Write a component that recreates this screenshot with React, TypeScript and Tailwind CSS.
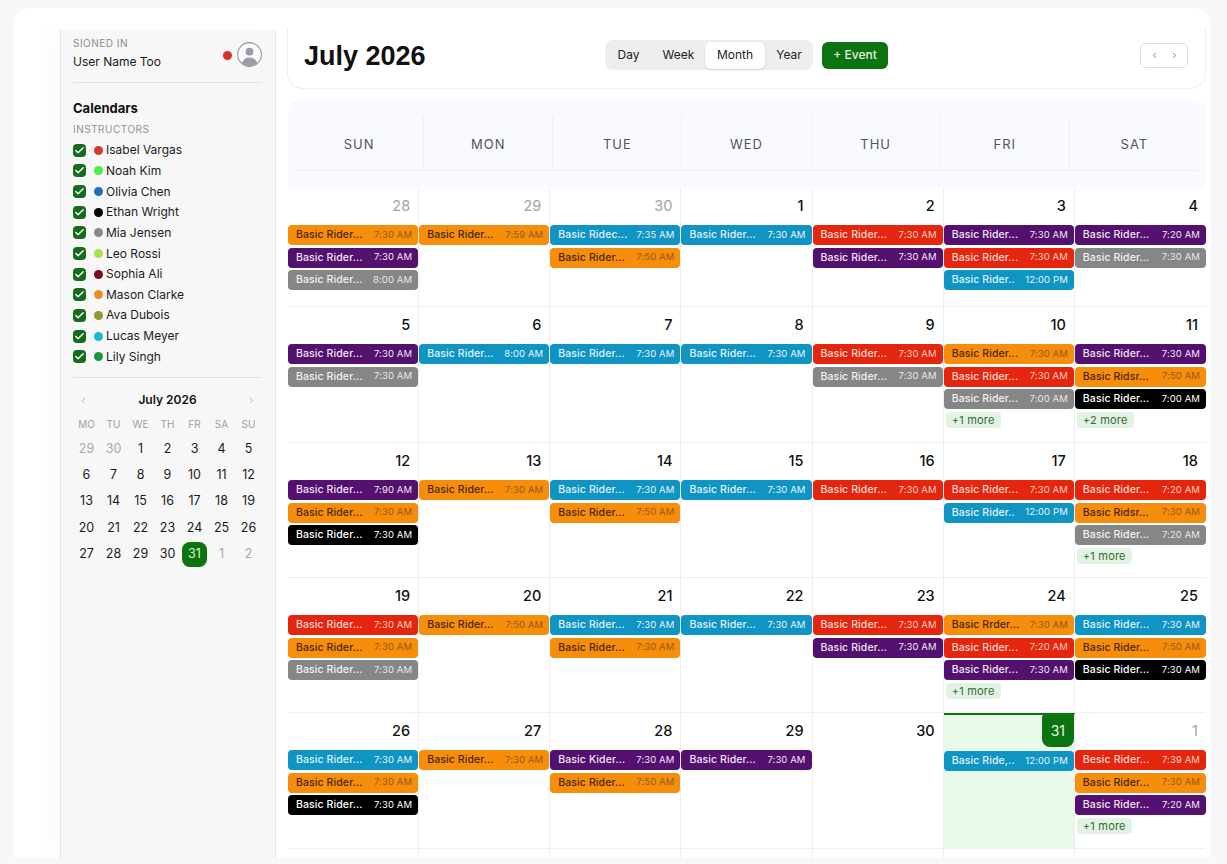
import { Check, ChevronLeft, ChevronRight } from "lucide-react";

type Color = "o" | "p" | "g" | "b" | "r" | "k";
type Ev = [Color, string, string?];
type Day = { n: number; muted?: boolean; today?: boolean; events: Ev[]; more?: number };

const colorClass: Record<Color, { box: string; title: string; time: string }> = {
  o: { box: "bg-[#f68e0c]", title: "text-[#4a2406]", time: "text-[#95591a]" },
  p: { box: "bg-[#54106f]", title: "text-[#f1e6f5]", time: "text-[#f1e6f5]" },
  g: { box: "bg-[#868686]", title: "text-[#f2f2f2]", time: "text-[#e6e6e6]" },
  b: { box: "bg-[#0f94c4]", title: "text-[#e0f3fa]", time: "text-[#e8f6fb]" },
  r: { box: "bg-[#e5260f]", title: "text-[#ffd9d0]", time: "text-[#ffd0c4]" },
  k: { box: "bg-black", title: "text-white", time: "text-white" },
};

const weeks: { h: string; days: Day[] }[] = [
  {
    h: "h-[119px]",
    days: [
      { n: 28, muted: true, events: [["o", "7:30 AM"], ["p", "7:30 AM"], ["g", "8:00 AM"]] },
      { n: 29, muted: true, events: [["o", "7:59 AM"]] },
      { n: 30, muted: true, events: [["b", "7:35 AM", "Basic Ridec..."], ["o", "7:50 AM"]] },
      { n: 1, events: [["b", "7:30 AM"]] },
      { n: 2, events: [["r", "7:30 AM"], ["p", "7:30 AM"]] },
      { n: 3, events: [["p", "7:30 AM"], ["r", "7:30 AM"], ["b", "12:00 PM", "Basic Rider.."]] },
      { n: 4, events: [["p", "7:20 AM"], ["g", "7:30 AM"]] },
    ],
  },
  {
    h: "h-[136px]",
    days: [
      { n: 5, events: [["p", "7:30 AM"], ["g", "7:30 AM"]] },
      { n: 6, events: [["b", "8:00 AM"]] },
      { n: 7, events: [["b", "7:30 AM"]] },
      { n: 8, events: [["b", "7:30 AM"]] },
      { n: 9, events: [["r", "7:30 AM"], ["g", "7:30 AM"]] },
      { n: 10, events: [["o", "7:30 AM"], ["r", "7:30 AM"], ["g", "7:00 AM"]], more: 1 },
      { n: 11, events: [["p", "7:30 AM"], ["o", "7:50 AM", "Basic Ridsr..."], ["k", "7:00 AM"]], more: 2 },
    ],
  },
  {
    h: "h-[135px]",
    days: [
      { n: 12, events: [["p", "7:90 AM"], ["o", "7:30 AM"], ["k", "7:30 AM"]] },
      { n: 13, events: [["o", "7:30 AM"]] },
      { n: 14, events: [["b", "7:30 AM"], ["o", "7:50 AM"]] },
      { n: 15, events: [["b", "7:30 AM"]] },
      { n: 16, events: [["r", "7:30 AM"]] },
      { n: 17, events: [["r", "7:30 AM"], ["b", "12:00 PM", "Basic Rider.."]] },
      { n: 18, events: [["r", "7:20 AM"], ["o", "7:30 AM", "Basic Ridsr..."], ["g", "7:20 AM"]], more: 1 },
    ],
  },
  {
    h: "h-[135px]",
    days: [
      { n: 19, events: [["r", "7:30 AM"], ["o", "7:30 AM"], ["g", "7:30 AM"]] },
      { n: 20, events: [["o", "7:50 AM"]] },
      { n: 21, events: [["b", "7:30 AM"], ["o", "7:30 AM"]] },
      { n: 22, events: [["b", "7:30 AM"]] },
      { n: 23, events: [["r", "7:30 AM"], ["p", "7:30 AM"]] },
      { n: 24, events: [["o", "7:30 AM", "Basic Rrder..."], ["r", "7:20 AM"], ["p", "7:30 AM"]], more: 1 },
      { n: 25, events: [["b", "7:30 AM"], ["o", "7:50 AM"], ["k", "7:30 AM"]] },
    ],
  },
  {
    h: "h-[136px]",
    days: [
      { n: 26, events: [["b", "7:30 AM"], ["o", "7:30 AM"], ["k", "7:30 AM"]] },
      { n: 27, events: [["o", "7:30 AM"]] },
      { n: 28, events: [["p", "7:30 AM", "Basic Kider..."], ["o", "7:50 AM"]] },
      { n: 29, events: [["p", "7:30 AM"]] },
      { n: 30, events: [] },
      { n: 31, today: true, events: [["b", "12:00 PM", "Basic Ride,.."]] },
      { n: 1, muted: true, events: [["r", "7:39 AM", "Besic Rider..."], ["o", "7:30 AM"], ["p", "7:20 AM"]], more: 1 },
    ],
  },
];

const instructors = [
  ["Isabel Vargas", "bg-[#d93a2b]"],
  ["Noah Kim", "bg-[#45ee4a]"],
  ["Olivia Chen", "bg-[#1f6fc0]"],
  ["Ethan Wright", "bg-black"],
  ["Mia Jensen", "bg-[#8a8a8e]"],
  ["Leo Rossi", "bg-[#a6e34f]"],
  ["Sophia Ali", "bg-[#7a0c1e]"],
  ["Mason Clarke", "bg-[#f28c28]"],
  ["Ava Dubois", "bg-[#8f9a32]"],
  ["Lucas Meyer", "bg-[#12bcd0]"],
  ["Lily Singh", "bg-[#149a3c]"],
];

const miniDays = [
  29, 30, 1, 2, 3, 4, 5, 6, 7, 8, 9, 10, 11, 12, 13, 14, 15, 16, 17, 18, 19, 20, 21, 22, 23, 24, 25, 26, 27, 28, 29, 30,
  31, 1, 2,
];

function EventChip({ ev }: { ev: Ev }) {
  const c = colorClass[ev[0]];
  return (
    <div className={`h-[20px] rounded-[4px] flex items-center justify-between pl-[8px] pr-[6px] text-[10.5px] tracking-[0.1px] font-medium whitespace-nowrap ${c.box}`}>
      <span className={c.title}>{ev[2] ?? "Basic Rider..."}</span>
      <span className={`font-normal text-[9.5px] ${c.time}`}>{ev[1]}</span>
    </div>
  );
}

function DayCell({ day }: { day: Day }) {
  return (
    <div className={`border-r border-[#eeeeee] last:border-r-0 min-w-0 ${day.today ? "bg-[#e8f8e9] border-t-2 border-t-[#0b730f]" : ""}`}>
      {day.today ? (
        <div className="h-[36px] flex justify-end">
          <div className="w-[32px] h-[33px] -mt-px bg-[#0b730f] text-[#e8f8e9] rounded-b-lg rounded-tl-sm flex items-center justify-center text-[14px]">
            {day.n}
          </div>
        </div>
      ) : (
        <div className={`h-[37px] pt-[8px] pr-[8px] text-right text-[14.5px] font-medium leading-[20px] ${day.muted ? "text-[#a3a3a3] font-normal" : "text-[#111111]"}`}>
          {day.n}
        </div>
      )}
      <div className="flex flex-col gap-[2.5px]">
        {day.events.map((ev, i) => (
          <EventChip key={i} ev={ev} />
        ))}
        {day.more && (
          <div className="self-start ml-[2px] h-[16px] px-[6px] rounded-[4px] bg-[#e3f3e3] text-[#2f6b34] text-[11px] tracking-[0.2px] leading-[16px]">
            +{day.more} more
          </div>
        )}
      </div>
    </div>
  );
}

function Sidebar() {
  return (
    <aside className="w-[216px] shrink-0 mt-[22px] bg-[#f7f7f7] border-x border-[#e3e4e6] pl-[12px] pr-[13px] shadow-[-14px_0_18px_rgba(0,0,0,0.015)]">
      <div className="h-[53px] pt-[7px] flex justify-between border-b border-[#e2e2e2]">
        <div>
          <div className="text-[10px] leading-[12px] tracking-[0.5px] text-[#8b8b8b]">SIONED IN</div>
          <div className="text-[12px] leading-[18px] mt-[4px] text-[#1b1b1b]">User Name Too</div>
        </div>
        <div className="flex items-start gap-[5px] pt-[6px]">
          <span className="w-[9px] h-[9px] rounded-full bg-[#d8302a] mt-[8px]" />
          <svg viewBox="0 0 24 24" className="w-[25px] h-[25px] -mt-px">
            <circle cx="12" cy="12" r="11.4" fill="#fafafa" stroke="#8f929c" strokeWidth="1" />
            <circle cx="12" cy="9.3" r="3.7" fill="#9a9caa" />
            <path d="M4.6 20.2c1.2-3.6 4-5.4 7.400-5.400s6.200 1.800 7.400 5.400A11 11 0 0 1 12 23a11 11 0 0 1-7.400-2.800z" fill="#9a9caa" />
          </svg>
        </div>
      </div>
      <div className="text-[13px] font-bold leading-[18px] mt-[16px] text-[#111111]">Calendars</div>
      <div className="text-[10px] leading-[12px] tracking-[0.5px] text-[#929292] mt-[6px]">INSTRUCTORS</div>
      <div className="mt-[5px] pb-[10px] border-b border-[#e2e2e2]">
        {instructors.map(([name, dot]) => (
          <div key={name} className="h-[20.65px] flex items-center">
            <span className="w-[13px] h-[13px] rounded-[4px] bg-[#166b1c] flex items-center justify-center">
              <Check size={11} strokeWidth={3} className="text-white" />
            </span>
            <span className={`w-[9px] h-[9px] rounded-full ml-[8px] mr-[3px] ${dot}`} />
            <span className="text-[12px] text-[#1c1c1c]">{name}</span>
          </div>
        ))}
      </div>
      <div className="mt-[13px] flex items-center justify-between px-[6px] h-[18px]">
        <ChevronLeft size={9} className="text-[#a0a0a0]" />
        <span className="text-[12px] font-semibold text-[#111111]">July 2026</span>
        <ChevronRight size={9} className="text-[#a0a0a0]" />
      </div>
      <div className="grid grid-cols-7 w-[189px] mt-[4px] text-center">
        {["MO", "TU", "WE", "TH", "FR", "SA", "SU"].map((d) => (
          <div key={d} className="h-[23px] text-[10px] leading-[23px] text-[#a0a0a0]">
            {d}
          </div>
        ))}
        {miniDays.map((d, i) => {
          const muted = i < 2 || i > 32;
          const selected = i === 32;
          return (
            <div key={i} className="h-[26.3px] flex items-center justify-center text-[12.5px]">
              <span className={selected ? "w-[25px] h-[25px] rounded-lg bg-[#0b730f] text-[#d8f2d8] flex items-center justify-center" : muted ? "text-[#a8a8a8]" : "text-[#1a1a1a]"}>
                {d}
              </span>
            </div>
          );
        })}
      </div>
    </aside>
  );
}

function TopBar() {
  return (
    <div className="h-[61px] mt-[20px] mr-px border border-t-0 border-[#eceef2] rounded-b-2xl bg-white flex items-center pl-[16px] pr-[17px] pb-[6px]">
      <h1 className="w-[301px] mt-[2px] text-[27px] font-bold text-[#111111] [font-family:'Liberation_Sans',sans-serif]">July 2026</h1>
      <div className="h-[30px] w-[208px] rounded-lg bg-[#eeeeee] flex items-center text-[12px] text-[#222222]">
        <span className="w-[47px] text-center">Day</span>
        <span className="w-[53px] text-center">Week</span>
        <span className="w-[60px] h-[27px] bg-white rounded-md shadow-sm flex items-center justify-center">Month</span>
        <span className="w-[48px] text-center">Year</span>
      </div>
      <button className="ml-[9px] w-[66px] h-[27px] rounded-md bg-[#0b730f] text-[#e6f4e6] text-[12px] font-medium">+ Event</button>
      <div className="ml-auto w-[48px] h-[25px] rounded-md border border-[#dedede] bg-white flex items-center justify-around px-[3px]">
        <ChevronLeft size={9} className="text-[#666666]" />
        <ChevronRight size={9} className="text-[#666666]" />
      </div>
    </div>
  );
}

export default function App() {
  return (
    <div className="h-[864px] overflow-hidden bg-[#f7f8fa] pt-[8px] pl-[14px] pr-[17px] [font-family:Inter,sans-serif]">
      <div className="h-[850px] bg-white rounded-t-2xl pl-[46px] flex overflow-hidden">
        <Sidebar />
        <main className="w-[920px] ml-[11px] shrink-0">
          <TopBar />
          <div className="mt-[11px] h-[88px] ml-px mr-px bg-[#f8fafd] rounded-t-xl px-[7px] pt-[16px]">
            <div className="h-[55px] grid grid-cols-7 border-b border-[#eef0f4]">
              {["SUN", "MON", "TUE", "WED", "THU", "FRI", "SAT"].map((d) => (
                <div key={d} className="border-r border-[#edeff3] last:border-r-0 flex items-center justify-center pt-[3px] text-[13px] tracking-[1px] text-[#555555]">
                  {d}
                </div>
              ))}
            </div>
          </div>
          <div className="ml-px mr-px">
            {weeks.map((w, i) => (
              <div key={i} className={`grid grid-cols-7 border-b border-[#eeeeee] ${w.h}`}>
                {w.days.map((d, j) => (
                  <DayCell key={j} day={d} />
                ))}
              </div>
            ))}
            <div className="grid grid-cols-7 h-[12px]">
              {[0, 1, 2, 3, 4, 5, 6].map((k) => (
                <div key={k} className="border-r border-[#eeeeee] last:border-r-0" />
              ))}
            </div>
          </div>
        </main>
      </div>
    </div>
  );
}
